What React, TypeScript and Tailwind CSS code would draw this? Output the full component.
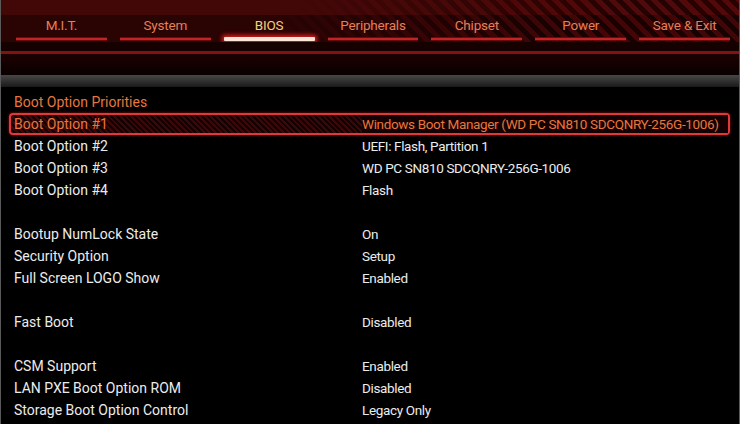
import React from "react";

const tabs = ["M.I.T.", "System", "BIOS", "Peripherals", "Chipset", "Power", "Save & Exit"];

type Row = { label: string; value: string } | null;

const rows: Row[] = [
  { label: "Boot Option #2", value: "UEFI: Flash, Partition 1" },
  { label: "Boot Option #3", value: "WD PC SN810 SDCQNRY-256G-1006" },
  { label: "Boot Option #4", value: "Flash" },
  null,
  { label: "Bootup NumLock State", value: "On" },
  { label: "Security Option", value: "Setup" },
  { label: "Full Screen LOGO Show", value: "Enabled" },
  null,
  { label: "Fast Boot", value: "Disabled" },
  null,
  { label: "CSM Support", value: "Enabled" },
  { label: "LAN PXE Boot Option ROM", value: "Disabled" },
  { label: "Storage Boot Option Control", value: "Legacy Only" },
];

export default function App() {
  return (
    <div
      className="w-[740px] h-[424px] overflow-hidden bg-black border-x border-[#5a5a5a] flex flex-col"
      style={{ fontFamily: 'Roboto, "Open Sans", sans-serif' }}
    >
      {/* header */}
      <div className="h-[15px] bg-[linear-gradient(to_right,#420707_0%,#420707_40%,transparent_85%),repeating-linear-gradient(45deg,#520909_0px,#520909_5px,#260202_5px,#260202_10px)]" />
      <div className="h-[27px] flex gap-[13px] pl-[15px] pr-[9px] bg-[linear-gradient(to_right,#2a0303_0%,#2a0303_35%,transparent_80%),repeating-linear-gradient(45deg,#420606_0px,#420606_5px,#180101_5px,#180101_10px)]">
        {tabs.map((t) => {
          const active = t === "BIOS";
          return (
            <div key={t} className="w-[91px] flex flex-col items-center">
              <div
                className={`h-[23px] flex items-center text-[13.5px] leading-none whitespace-nowrap tracking-[-0.2px] ${
                  active ? "text-[#f2cf7e]" : "text-[#e57f57]"
                }`}
              >
                {t}
              </div>
              <div
                className={`mt-auto mb-px w-full h-[4px] rounded-[1px] ${
                  active
                    ? "bg-[#ffe4d8] shadow-[0_0_4px_2px_#e02020]"
                    : "bg-[#c02424] border-y border-[#6a0a0a]"
                }`}
              />
            </div>
          );
        })}
      </div>
      <div className="h-[9px] bg-[#160101]" />
      <div className="h-[3px] bg-[#801414]" />
      <div className="h-[21px] bg-[linear-gradient(to_bottom,#1c0101,#0a0000)]" />
      <div className="h-[12px] bg-[linear-gradient(to_bottom,#474747,#1a1a1a)]" />

      {/* content */}
      <div className="pt-[4px] flex flex-col text-[14px] leading-[22px] whitespace-nowrap">
        <div className="h-[22px] pl-[13px] text-[#e8763e]">Boot Option Priorities</div>
        <div className="h-[22px] ml-[8px] mr-[9px] rounded-[4px] border-2 border-[#e0393a] flex items-center text-[#e8763e] bg-[repeating-linear-gradient(45deg,#3a0808_0px,#3a0808_2px,#140202_2px,#140202_4px)] shadow-[0_0_3px_#a01010]">
          <div className="w-[351px] shrink-0 pl-[3px]">Boot Option #1</div>
          <div className="flex-1 self-stretch flex items-center bg-[#140202] pr-[2px] text-[13.5px] tracking-[-0.35px]">
            Windows Boot Manager (WD PC SN810 SDCQNRY-256G-1006)
          </div>
        </div>
        {rows.map((r, i) =>
          r ? (
            <div key={i} className="h-[22px] flex text-[#ececec]">
              <div className="w-[361px] shrink-0 pl-[13px]">{r.label}</div>
              <div className="text-[13.5px] tracking-[-0.35px]">{r.value}</div>
            </div>
          ) : (
            <div key={i} className="h-[22px]" />
          )
        )}
      </div>
    </div>
  );
}
